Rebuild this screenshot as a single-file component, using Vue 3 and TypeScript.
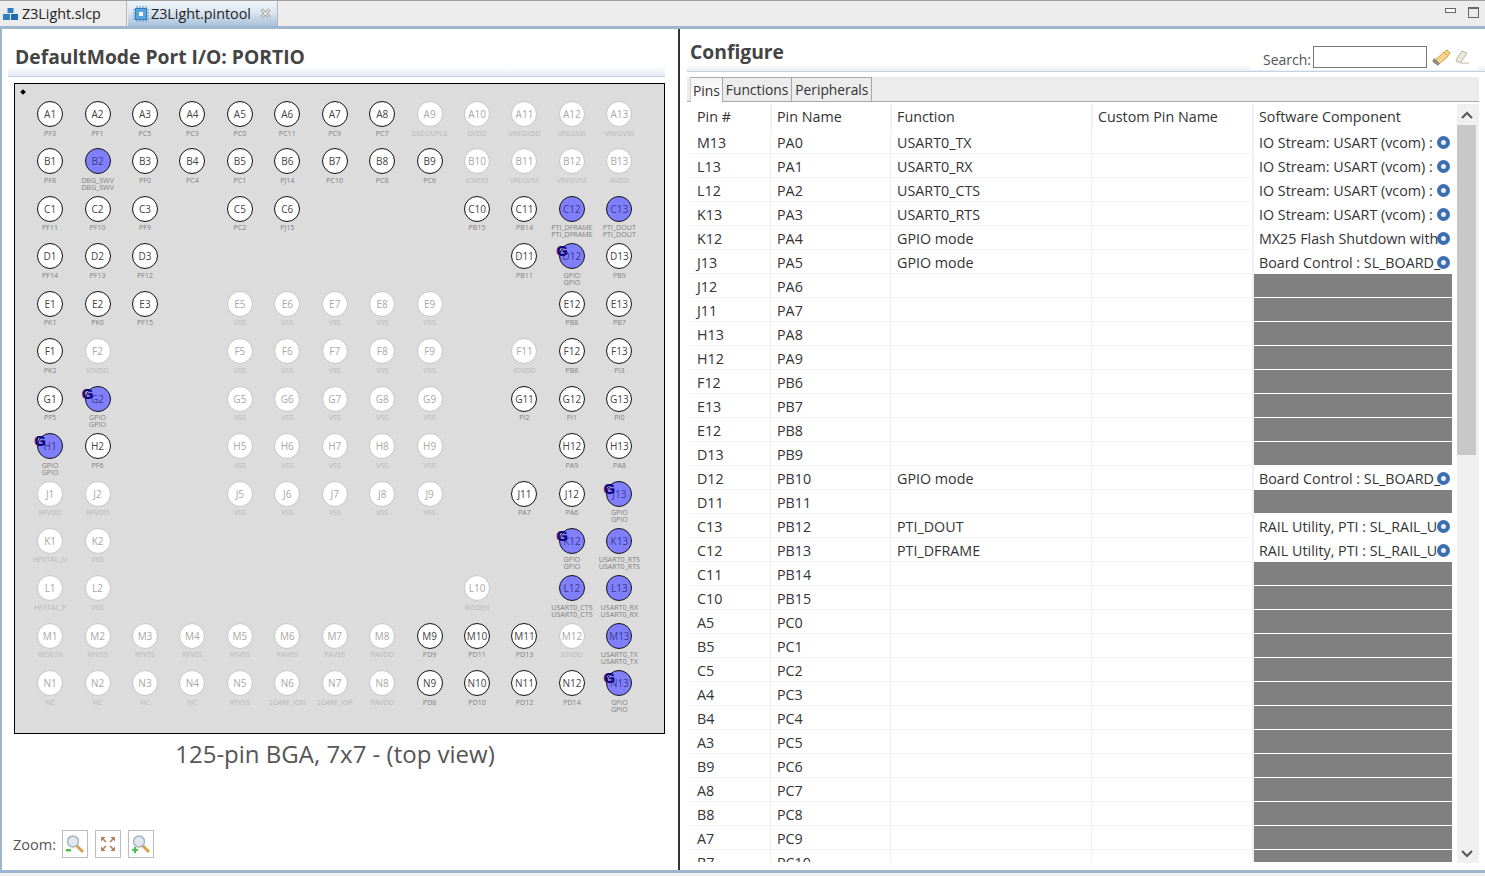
<script setup lang="ts">
interface Pin {
  id: string;
  label: string;
  kind: "on" | "off" | "sel" | "gpio" | "none";
}

interface PinRow {
  pin: string;
  name: string;
  fn: string;
  component: string;
}

// ~ power pin (greyed), * routed peripheral, ^ routed gpio, . no ball
const layout: string[] = [
  "PF3 PF1 PC5 PC3 PC0 PC11 PC9 PC7 ~DECOUPLE ~DVDD ~VREGVDD ~VREGSW ~VREGVSS",
  "PF8 *DBG_SWV PF0 PC4 PC1 PJ14 PC10 PC8 PC6 ~IOVDD ~VREGVSS ~VREGVSS ~AVDD",
  "PF11 PF10 PF9 . PC2 PJ15 . . . PB15 PB14 *PTI_DFRAME *PTI_DOUT",
  "PF14 PF13 PF12 . . . . . . . PB11 ^GPIO PB9",
  "PK1 PK0 PF15 . ~VSS ~VSS ~VSS ~VSS ~VSS . . PB8 PB7",
  "PK2 ~IOVDD . . ~VSS ~VSS ~VSS ~VSS ~VSS . ~IOVDD PB6 PI3",
  "PF5 ^GPIO . . ~VSS ~VSS ~VSS ~VSS ~VSS . PI2 PI1 PI0",
  "^GPIO PF6 . . ~VSS ~VSS ~VSS ~VSS ~VSS . . PA9 PA8",
  "~RFVDD ~RFVDD . . ~VSS ~VSS ~VSS ~VSS ~VSS . PA7 PA6 ^GPIO",
  "~HFXTAL_N ~VSS . . . . . . . . . ^GPIO *USART0_RTS",
  "~HFXTAL_P ~VSS . . . . . . . ~BODEN . *USART0_CTS *USART0_RX",
  "~RESETn ~RFVSS ~RFVSS ~RFVSS ~RFVSS ~PAVSS ~PAVSS ~PAVDD PD9 PD11 PD13 ~IOVDD *USART0_TX",
  "~NC ~NC ~NC ~NC ~RFVSS ~2G4RF_ION ~2G4RF_IOP ~PAVDD PD8 PD10 PD12 PD14 ^GPIO",
];

const rowLetters = "ABCDEFGHJKLMN";

const pins: Pin[] = layout.flatMap((line, r) =>
  line.split(" ").map((token, c) => {
    const id = `${rowLetters[r]}${c + 1}`;
    if (token === ".") return { id, label: "", kind: "none" as const };
    if (token[0] === "~") return { id, label: token.slice(1), kind: "off" as const };
    if (token[0] === "*") return { id, label: token.slice(1), kind: "sel" as const };
    if (token[0] === "^") return { id, label: token.slice(1), kind: "gpio" as const };
    return { id, label: token, kind: "on" as const };
  })
);

const vcom = "IO Stream: USART (vcom) :";
const board = "Board Control : SL_BOARD_";
const rail = "RAIL Utility, PTI : SL_RAIL_U";

const rows: PinRow[] = [
  { pin: "M13", name: "PA0", fn: "USART0_TX", component: vcom },
  { pin: "L13", name: "PA1", fn: "USART0_RX", component: vcom },
  { pin: "L12", name: "PA2", fn: "USART0_CTS", component: vcom },
  { pin: "K13", name: "PA3", fn: "USART0_RTS", component: vcom },
  { pin: "K12", name: "PA4", fn: "GPIO mode", component: "MX25 Flash Shutdown with" },
  { pin: "J13", name: "PA5", fn: "GPIO mode", component: board },
  { pin: "J12", name: "PA6", fn: "", component: "" },
  { pin: "J11", name: "PA7", fn: "", component: "" },
  { pin: "H13", name: "PA8", fn: "", component: "" },
  { pin: "H12", name: "PA9", fn: "", component: "" },
  { pin: "F12", name: "PB6", fn: "", component: "" },
  { pin: "E13", name: "PB7", fn: "", component: "" },
  { pin: "E12", name: "PB8", fn: "", component: "" },
  { pin: "D13", name: "PB9", fn: "", component: "" },
  { pin: "D12", name: "PB10", fn: "GPIO mode", component: board },
  { pin: "D11", name: "PB11", fn: "", component: "" },
  { pin: "C13", name: "PB12", fn: "PTI_DOUT", component: rail },
  { pin: "C12", name: "PB13", fn: "PTI_DFRAME", component: rail },
  { pin: "C11", name: "PB14", fn: "", component: "" },
  { pin: "C10", name: "PB15", fn: "", component: "" },
  { pin: "A5", name: "PC0", fn: "", component: "" },
  { pin: "B5", name: "PC1", fn: "", component: "" },
  { pin: "C5", name: "PC2", fn: "", component: "" },
  { pin: "A4", name: "PC3", fn: "", component: "" },
  { pin: "B4", name: "PC4", fn: "", component: "" },
  { pin: "A3", name: "PC5", fn: "", component: "" },
  { pin: "B9", name: "PC6", fn: "", component: "" },
  { pin: "A8", name: "PC7", fn: "", component: "" },
  { pin: "B8", name: "PC8", fn: "", component: "" },
  { pin: "A7", name: "PC9", fn: "", component: "" },
  { pin: "B7", name: "PC10", fn: "", component: "" },
];
</script>

<template>
  <div class="window">
    <div class="editor-tabs">
      <div class="editor-tab">
        <svg width="18" height="14" viewBox="0 0 18 14">
          <rect x="5.5" y="1" width="6" height="5" fill="#2f7fc4" />
          <rect x="1" y="7" width="7" height="6" fill="#2f7fc4" />
          <rect x="9" y="7" width="7" height="6" fill="#1f6bb0" />
        </svg>
        <span>Z3Light.slcp</span>
      </div>
      <div class="editor-tab active">
        <svg width="16" height="16" viewBox="0 0 16 16">
          <rect x="2.5" y="2.5" width="11" height="11" fill="#5aa6dc" stroke="#2f7fc4" />
          <rect x="6" y="6" width="4" height="4" fill="#fff" />
          <path d="M4 0v2M7 0v2M10 0v2M13 0v2M4 14v2M7 14v2M10 14v2M13 14v2M0 4h2M0 7h2M0 10h2M0 13h2M14 4h2M14 7h2M14 10h2M14 13h2" stroke="#4a93cc" />
        </svg>
        <span>Z3Light.pintool</span>
        <svg class="tab-close" width="11" height="11" viewBox="0 0 11 11">
          <path d="M1.5 1.5l8 8M9.5 1.5l-8 8" stroke="#8a8a8a" stroke-width="3" />
          <path d="M1.5 1.5l8 8M9.5 1.5l-8 8" stroke="#f4f4f4" stroke-width="1.2" />
        </svg>
      </div>
      <div class="window-controls">
        <span class="minimize"></span>
        <span class="maximize"></span>
      </div>
    </div>

    <div class="workspace">
      <section class="left-pane">
        <h2 class="pane-title left-title"><span>DefaultMode Port I/O: PORTIO</span></h2>

        <div class="chip">
          <span class="pin-one"></span>
          <div v-for="pin in pins" :key="pin.id" class="cell">
            <template v-if="pin.kind !== 'none'">
              <div class="ball" :class="pin.kind">
                {{ pin.id }}
                <span v-if="pin.kind === 'gpio'" class="gpio-mark">G</span>
              </div>
              <div class="ball-label" :class="pin.kind">
                <span>{{ pin.label }}</span>
                <span v-if="pin.kind === 'sel' || pin.kind === 'gpio'">{{ pin.label }}</span>
              </div>
            </template>
          </div>
        </div>

        <div class="chip-caption">125-pin BGA, 7x7 - (top view)</div>

        <div class="zoom-bar">
          <span>Zoom:</span>
          <button class="zoom-button">
            <svg width="20" height="20" viewBox="0 0 20 20">
              <path d="M11 11l7 7" stroke="#d9a24a" stroke-width="3" />
              <circle cx="8" cy="7.5" r="5.5" fill="#dfe8ee" stroke="#a9b4bb" stroke-width="1.5" />
              <rect x="1" y="15" width="5" height="2.5" fill="#4cc24c" />
            </svg>
          </button>
          <button class="zoom-button">
            <svg width="16" height="16" viewBox="0 0 16 16">
              <path d="M1 1h4.500L1 5.500zM15 1v4.500L10.500 1zM1 15v-4.500L5.500 15zM15 15h-4.500L15 10.500z" fill="#b67d5c" />
              <path d="M3 3l3 3M13 3l-3 3M3 13l3-3M13 13l-3-3" stroke="#b67d5c" stroke-width="1.6" />
            </svg>
          </button>
          <button class="zoom-button">
            <svg width="20" height="20" viewBox="0 0 20 20">
              <path d="M11 11l7 7" stroke="#d9a24a" stroke-width="3" />
              <circle cx="8" cy="7.5" r="5.5" fill="#dfe8ee" stroke="#a9b4bb" stroke-width="1.5" />
              <path d="M1 16h6M4 13v6" stroke="#4cc24c" stroke-width="2" />
            </svg>
          </button>
        </div>
      </section>

      <div class="sash"></div>

      <section class="right-pane">
        <div class="config-head">
          <h2 class="pane-title">Configure</h2>
          <div class="search">
            <span class="search-label">Search:</span>
            <input class="search-input" type="text" />
            <svg width="20" height="18" viewBox="0 0 20 18">
              <path d="M2 14l10-9 4-3 3 3-3 4-9 8z" fill="#f8d58c" stroke="#d79a36" />
              <path d="M3.500 10.500l5 5-2 1.500-5-4z" fill="#8f8f8f" stroke="#6f6f6f" stroke-width="0.5" />
              <path d="M13 4l3 3" stroke="#d79a36" />
            </svg>
            <svg width="18" height="16" viewBox="0 0 18 16">
              <path d="M3 11L9 2l5 2-6 9H4z" fill="#eee9dc" stroke="#bdb6a2" />
              <path d="M7 14h9" stroke="#bdb6a2" />
            </svg>
          </div>
        </div>

        <div class="config-tabs">
          <div class="config-tab active">Pins</div>
          <div class="config-tab">Functions</div>
          <div class="config-tab">Peripherals</div>
        </div>

        <div class="table-wrap">
          <div class="table-clip">
            <table class="pin-table">
              <colgroup>
                <col class="col-pin" />
                <col class="col-name" />
                <col class="col-fn" />
                <col class="col-custom" />
                <col class="col-comp" />
              </colgroup>
              <thead>
                <tr>
                  <th>Pin #</th>
                  <th>Pin Name</th>
                  <th>Function</th>
                  <th>Custom Pin Name</th>
                  <th>Software Component</th>
                </tr>
              </thead>
              <tbody>
                <tr v-for="row in rows" :key="row.pin">
                  <td>{{ row.pin }}</td>
                  <td>{{ row.name }}</td>
                  <td>{{ row.fn }}</td>
                  <td></td>
                  <td v-if="row.component" class="component">
                    <div class="component-cell">
                      <span class="component-text">{{ row.component }}</span>
                      <span class="gear"></span>
                    </div>
                  </td>
                  <td v-else class="unavailable"></td>
                </tr>
              </tbody>
            </table>
          </div>
          <div class="scrollbar">
            <svg class="arrow" width="14" height="9" viewBox="0 0 14 9">
              <path d="M2 7l5-5 5 5" fill="none" stroke="#555" stroke-width="2" />
            </svg>
            <div class="scroll-track"><div class="scroll-thumb"></div></div>
            <svg class="arrow" width="14" height="9" viewBox="0 0 14 9">
              <path d="M2 2l5 5 5-5" fill="none" stroke="#555" stroke-width="2" />
            </svg>
          </div>
        </div>
      </section>
    </div>

    <div class="status-edge"></div>
  </div>
</template>

<style scoped>
.window {
  width: 1485px;
  height: 876px;
  display: flex;
  flex-direction: column;
  overflow: hidden;
  background: #fff;
  font-family: "Open Sans", "Noto Sans", sans-serif;
  color: #333;
}

.editor-tabs {
  height: 26px;
  flex: none;
  display: flex;
  align-items: stretch;
  background: #ececec;
  border-top: 1px solid #a0a0a0;
  box-sizing: border-box;
}

.editor-tab {
  width: 127px;
  display: flex;
  align-items: center;
  gap: 2px;
  padding-left: 2px;
  box-sizing: border-box;
  font-size: 14.3px;
  color: #222;
  border-right: 1px solid #b5b5b5;
}

.editor-tab.active {
  width: 150px;
  margin-left: 1px;
  padding-left: 5px;
  gap: 2px;
  background: linear-gradient(#eef3f8, #dfe8f2 40%, #a9c1da);
}

.tab-close {
  margin-left: 7px;
}

.window-controls {
  margin-left: auto;
  display: flex;
  align-items: flex-start;
  gap: 12px;
  padding: 6px 6px 0 0;
}

.minimize {
  width: 9px;
  height: 3px;
  margin-top: 1px;
  border: 1px solid #666;
  background: #fff;
}

.maximize {
  width: 9px;
  height: 8px;
  border: 1px solid #666;
  border-top-width: 2px;
}

.workspace {
  flex: none;
  height: 847px;
  display: flex;
  border-top: 3px solid #9fb6d0;
  border-bottom: 3px solid #9fb6d0;
  box-sizing: border-box;
}

.left-pane {
  width: 678px;
  flex: none;
  border-left: 2px solid #9fb6d0;
  box-sizing: border-box;
  display: flex;
  flex-direction: column;
  padding-left: 12px;
}

.pane-title {
  margin: 0;
  font-size: 19.3px;
  line-height: 26px;
  font-weight: 700;
  color: #444;
}

.left-title {
  height: 48px;
  width: 657px;
  margin-left: -6px;
  padding: 15px 0 0 7px;
  box-sizing: border-box;
  background: linear-gradient(#fff 80%, #e4ebf3);
  border-bottom: 1px solid #c3d2e1;
}

.chip {
  position: relative;
  width: 651px;
  height: 651px;
  margin-top: 6px;
  box-sizing: border-box;
  border: 1px solid #000;
  background: #dcdcdc;
  padding: 17px 0 0 11.4px;
  display: grid;
  grid-template-columns: repeat(13, 47.45px);
  grid-template-rows: repeat(13, 47.45px);
}

.pin-one {
  position: absolute;
  left: 6px;
  top: 6px;
  width: 4px;
  height: 4px;
  background: #000;
  transform: rotate(45deg);
}

.cell {
  display: flex;
  flex-direction: column;
  align-items: center;
  min-width: 0;
}

.ball {
  position: relative;
  width: 26px;
  height: 26px;
  flex: none;
  box-sizing: border-box;
  border-radius: 50%;
  display: flex;
  align-items: center;
  justify-content: center;
  font-size: 10px;
  background: #fff;
  border: 1.5px solid #111;
  color: #444;
}

.ball.off {
  border-color: #c6c6c6;
  color: #a8a8a8;
}

.ball.sel,
.ball.gpio {
  background: #8080ff;
  color: #3c3c80;
  border-width: 1px;
}

.gpio-mark {
  position: absolute;
  left: -3px;
  top: 0;
  font-family: "Liberation Sans", sans-serif;
  font-size: 14px;
  line-height: 14px;
  font-weight: 700;
  color: #000080;
  text-shadow: -1px 0 #803070;
}

.ball-label {
  margin-top: 2.5px;
  display: flex;
  flex-direction: column;
  align-items: center;
  font-size: 7.1px;
  line-height: 7px;
  white-space: nowrap;
  color: #808080;
}

.ball-label.off {
  color: #b8b8b8;
}

.chip-caption {
  width: 651px;
  padding-right: 9px;
  box-sizing: border-box;
  margin-top: 5px;
  text-align: center;
  font-size: 24px;
  line-height: 30px;
  font-weight: 400;
  color: #555;
}

.zoom-bar {
  margin: 61px 0 0 -1px;
  display: flex;
  align-items: center;
  font-size: 14.5px;
  color: #555;
}

.zoom-button {
  width: 26px;
  height: 28px;
  margin-left: 6px;
  padding: 0;
  display: flex;
  align-items: center;
  justify-content: center;
  background: #fff;
  border: 1.5px solid #bdbdbd;
  box-sizing: border-box;
}

.zoom-button + .zoom-button {
  margin-left: 7px;
}

.sash {
  width: 4px;
  flex: none;
  border-left: 2px solid #333;
  box-sizing: border-box;
}

.right-pane {
  flex: 1;
  min-width: 0;
  display: flex;
  flex-direction: column;
  padding: 0 6px 0 5px;
}

.config-head {
  height: 43px;
  flex: none;
  margin-right: -6px;
  padding-left: 3px;
  display: flex;
  align-items: flex-start;
  justify-content: space-between;
  background: linear-gradient(#fff 85%, #e8eef5);
  border-bottom: 1px solid #c3d2e1;
  box-sizing: border-box;
}

.config-head .pane-title {
  margin-top: 10px;
}

.search {
  margin: 15px 8px 0 0;
  height: 26px;
  display: flex;
  align-items: center;
  gap: 2px;
  padding: 0 6px 0 12px;
  background: #fff;
  font-size: 14px;
  color: #555;
}

.search-label {
  padding-top: 5px;
}

.search-input {
  width: 114px;
  height: 22px;
  box-sizing: border-box;
  border: 1px solid #777;
  background: #fff;
  margin-right: 2px;
}

.config-tabs {
  flex: none;
  height: 25px;
  margin-top: 5px;
  display: flex;
  align-items: flex-end;
  padding-left: 3px;
  background: #ececec;
  border-bottom: 1px solid #a8a8a8;
  box-sizing: border-box;
  font-size: 13.8px;
}

.config-tab {
  height: 24px;
  display: flex;
  align-items: center;
  padding: 0 3px;
  box-sizing: border-box;
  border-right: 1px solid #a8a8a8;
  border-top: 1px solid #a8a8a8;
  color: #333;
}

.config-tab.active {
  background: linear-gradient(#f4f4f4, #fff);
  border-left: 1px solid #cfcfcf;
  height: 25px;
  padding: 0 2px;
  margin-bottom: -1px;
}

.table-wrap {
  flex: none;
  height: 761px;
  margin-top: 2px;
  display: flex;
}

.table-clip {
  width: 767px;
  margin-left: 3px;
  height: 758px;
  overflow: hidden;
}

.pin-table {
  width: 767px;
  border-collapse: separate;
  border-spacing: 0;
  table-layout: fixed;
  font-size: 14.3px;
  color: #333;
}

.col-pin {
  width: 80px;
}

.col-name {
  width: 120px;
}

.col-fn {
  width: 201px;
}

.col-custom {
  width: 161px;
}

.pin-table th {
  height: 26px;
  padding: 0 0 1px 5px;
  box-sizing: border-box;
  text-align: left;
  font-weight: 400;
  border-left: 2px solid #f0f0f0;
}

.pin-table th:first-child,
.pin-table td:first-child {
  border-left: 0;
  padding-left: 7px;
}

.pin-table td {
  height: 24px;
  padding: 1px 0 0 6px;
  box-sizing: border-box;
  border-bottom: 1px solid #f0f0f0;
  border-left: 1px solid #f0f0f0;
  white-space: nowrap;
  overflow: hidden;
}

.pin-table td.component,
.pin-table td.unavailable {
  padding: 1px 0 0 0;
  border-left-width: 2px;
  border-bottom: 1px solid #fff;
}

.pin-table td.unavailable {
  padding: 0;
  background: linear-gradient(90deg, #808080 198px, #fff 198px);
}

.component-cell {
  display: flex;
  align-items: center;
  width: 198px;
  padding-left: 5px;
  box-sizing: border-box;
}

.component-text {
  flex: 1;
  min-width: 0;
  white-space: nowrap;
}

.gear {
  flex: none;
  width: 13px;
  height: 13px;
  margin-right: 2px;
  box-sizing: border-box;
  border-radius: 50%;
  border: 4px solid #3d6eb0;
  background: #e8eef6;
}

.scrollbar {
  width: 22px;
  height: 759px;
  flex: none;
  display: flex;
  flex-direction: column;
  align-items: flex-start;
  background: #f0f0f0;
}

.arrow {
  flex: none;
  margin: 7px 0 5px 3px;
}

.scroll-track {
  flex: 1;
  width: 19px;
}

.scroll-thumb {
  height: 330px;
  background: #c8c8c8;
}

.status-edge {
  flex: 1;
  background: #f0f0f0;
}
</style>
